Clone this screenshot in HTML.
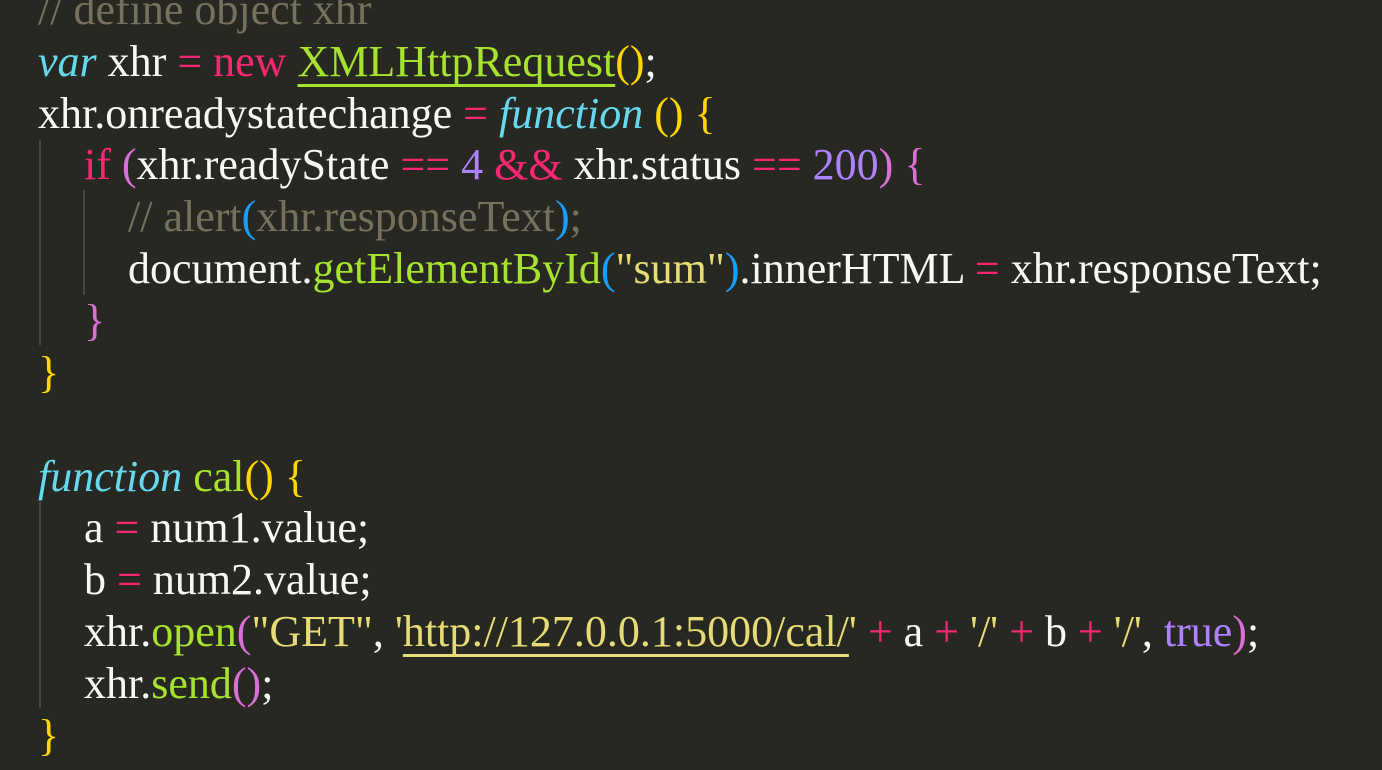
<!DOCTYPE html>
<html><head><meta charset="utf-8"><style>
html,body{margin:0;padding:0;background:#272822;width:1382px;height:770px;overflow:hidden}
.l{position:absolute;left:38px;white-space:pre;font-family:"Liberation Serif","Times New Roman",serif;font-size:44px;line-height:52px;height:52px;color:#f8f8f2}
.c{color:#75715e}.k{color:#f92672}.f{color:#66d9ef;font-style:italic}.g{color:#a6e22e}.s{color:#e6db74}.n{color:#ae81ff}
.y{color:#ffd700}.o{color:#da70d6}.b{color:#179fff}
.u{text-decoration:underline;text-underline-offset:8px;text-decoration-thickness:3px;text-decoration-skip-ink:none}
.guide{position:absolute;width:2px;background:#464741}
</style></head><body>
<div class="guide" style="left:39px;top:140px;height:205px"></div>
<div class="guide" style="left:83px;top:190px;height:105px"></div>
<div class="guide" style="left:39px;top:502px;height:206px"></div>
<div class="l" style="top:-16px"><span class="c">// define object xhr</span></div>
<div class="l" style="top:36px"><span class="f">var</span> xhr <span class="k">=</span> <span class="k">new</span> <span class="g u">XMLHttpRequest</span><span class="y">()</span>;</div>
<div class="l" style="top:88px">xhr.onreadystatechange <span class="k">=</span> <span class="f">function</span> <span class="y">()</span> <span class="y">{</span></div>
<div class="l" style="top:139px;left:84px"><span class="k">if</span> <span class="o">(</span>xhr.readyState <span class="k">==</span> <span class="n">4</span> <span class="k">&amp;&amp;</span> xhr.status <span class="k">==</span> <span class="n">200</span><span class="o">)</span> <span class="o">{</span></div>
<div class="l" style="top:191px;left:128px"><span class="c">// alert</span><span class="b">(</span><span class="c">xhr.responseText</span><span class="b">)</span><span class="c">;</span></div>
<div class="l" style="top:243px;left:128px">document.<span class="g">getElementById</span><span class="b">(</span><span class="s">"sum"</span><span class="b">)</span>.innerHTML <span class="k">=</span> xhr.responseText;</div>
<div class="l" style="top:295px;left:84px"><span class="o">}</span></div>
<div class="l" style="top:347px"><span class="y">}</span></div>
<div class="l" style="top:451px"><span class="f">function</span> <span class="g">cal</span><span class="y">()</span> <span class="y">{</span></div>
<div class="l" style="top:502px;left:84px">a <span class="k">=</span> num1.value;</div>
<div class="l" style="top:554px;left:84px">b <span class="k">=</span> num2.value;</div>
<div class="l" style="top:606px;left:84px">xhr.<span class="g">open</span><span class="o">(</span><span class="s">"GET"</span>, <span class="s">'<span class="u">http://127.0.0.1:5000/cal/</span>'</span> <span class="k">+</span> a <span class="k">+</span> <span class="s">'/'</span> <span class="k">+</span> b <span class="k">+</span> <span class="s">'/'</span>, <span class="n">true</span><span class="o">)</span>;</div>
<div class="l" style="top:658px;left:84px">xhr.<span class="g">send</span><span class="o">()</span>;</div>
<div class="l" style="top:710px"><span class="y">}</span></div>
</body></html>
